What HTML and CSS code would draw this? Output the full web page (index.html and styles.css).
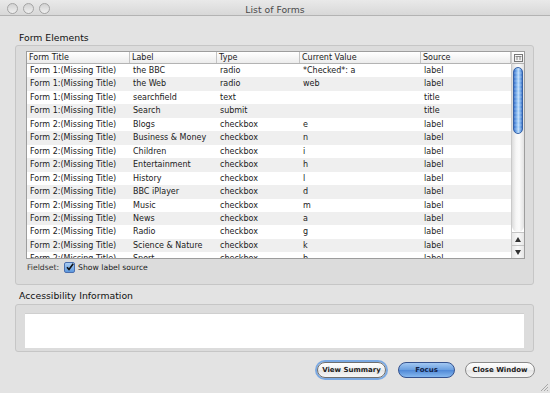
FILE: index.html
```html
<!DOCTYPE html>
<html lang="en">
<head>
    <meta charset="UTF-8">
    <title>List of Forms</title>
    <link rel="stylesheet" href="styles.css">
</head>
<body>
<div class="window">
    <div class="titlebar">
        <div class="lights"><span></span><span></span><span></span></div>
        <div class="title">List of Forms</div>
        <div></div>
    </div>

    <div class="content">
        <h2 class="group-title">Form Elements</h2>
        <div class="group elements">
            <div class="frame">
                <div class="list">
                    <div class="row head">
                        <div>Form Title</div><div>Label</div><div>Type</div><div>Current Value</div><div>Source</div>
                    </div>
                    <div class="rows" id="rows"></div>
                </div>
                <div class="vscroll">
                    <div class="corner">
                        <svg width="9" height="8" viewBox="0 0 9 8"><rect x="0.5" y="0.5" width="8" height="7" fill="none" stroke="#777"/><path d="M3 2v4M6 2v4M1.5 2.5h6" stroke="#888" fill="none"/></svg>
                    </div>
                    <div class="track"><div class="thumb"></div></div>
                    <div class="arrow up"></div>
                    <div class="arrow down"></div>
                </div>
            </div>
            <div class="fieldset-line">
                <span class="fs-label">Fieldset:</span>
                <span class="check">
                    <svg width="8" height="8" viewBox="0 0 8 8"><path d="M1 4.2l2 2.3L7.2 0.8" fill="none" stroke="#111" stroke-width="1.6"/></svg>
                </span>
                <span>Show label source</span>
            </div>
        </div>

        <h2 class="group-title second">Accessibility Information</h2>
        <div class="group info">
            <div class="info-text"></div>
        </div>

        <div class="buttons">
            <button class="btn focused">View Summary</button>
            <button class="btn default">Focus</button>
            <button class="btn">Close Window</button>
        </div>
    </div>

    <svg class="grip" width="10" height="10" viewBox="0 0 10 10"><path d="M9 2L2 9M9 5L5 9M9 8L8 9" stroke="#999" stroke-width="0.8"/></svg>
</div>

<script>
    // filas de la tabla: titulo, etiqueta, tipo, valor, fuente
    const filas = [
        ['Form 1:(Missing Title)', 'the BBC', 'radio', '*Checked*: a', 'label'],
        ['Form 1:(Missing Title)', 'the Web', 'radio', 'web', 'label'],
        ['Form 1:(Missing Title)', 'searchfield', 'text', '', 'title'],
        ['Form 1:(Missing Title)', 'Search', 'submit', '', 'title'],
        ['Form 2:(Missing Title)', 'Blogs', 'checkbox', 'e', 'label'],
        ['Form 2:(Missing Title)', 'Business & Money', 'checkbox', 'n', 'label'],
        ['Form 2:(Missing Title)', 'Children', 'checkbox', 'i', 'label'],
        ['Form 2:(Missing Title)', 'Entertainment', 'checkbox', 'h', 'label'],
        ['Form 2:(Missing Title)', 'History', 'checkbox', 'l', 'label'],
        ['Form 2:(Missing Title)', 'BBC iPlayer', 'checkbox', 'd', 'label'],
        ['Form 2:(Missing Title)', 'Music', 'checkbox', 'm', 'label'],
        ['Form 2:(Missing Title)', 'News', 'checkbox', 'a', 'label'],
        ['Form 2:(Missing Title)', 'Radio', 'checkbox', 'g', 'label'],
        ['Form 2:(Missing Title)', 'Science & Nature', 'checkbox', 'k', 'label'],
        ['Form 2:(Missing Title)', 'Sport', 'checkbox', 'b', 'label']
    ];

    const contenedor = document.getElementById('rows');
    filas.forEach(fila => {
        const row = document.createElement('div');
        row.className = 'row';
        fila.forEach(valor => {
            const cell = document.createElement('div');
            cell.textContent = valor;
            row.appendChild(cell);
        });
        contenedor.appendChild(row);
    });
</script>
</body>
</html>
```

FILE: styles.css
```css
body {
    margin: 0;
    background: #e3e3e3;
    font-family: "DejaVu Sans", Verdana, sans-serif;
    color: #1a1a1a;
}
.window {
    position: relative;
    width: 550px;
    height: 393px;
    overflow: hidden;
}

/* barra de titulo */
.titlebar {
    display: grid;
    grid-template-columns: 1fr auto 1fr;
    align-items: center;
    height: 15px;
    border-bottom: 1px solid #b3b3b3;
    background: linear-gradient(#e9e9e9, #d8d8d8);
}
.lights {
    display: flex;
    gap: 5px;
    padding-left: 7px;
}
.lights span {
    width: 9px;
    height: 9px;
    border-radius: 50%;
    border: 1px solid #a4a4a4;
    background: linear-gradient(#d2d2d2, #efefef);
    margin-top: 1px;
}
.title {
    font-size: 9.3px;
    color: #4a4a4a;
    padding-top: 3px;
}

.content {
    padding: 0 16px 0 15px;
}
.group-title {
    margin: 16px 0 1px 4px;
    font-size: 9.3px;
    line-height: 12px;
    font-weight: normal;
    color: #111;
}
.group-title.second {
    margin-top: 5px;
    margin-bottom: 2px;
}
.group {
    background: #dcdcdc;
    border: 1px solid #c6c6c6;
    border-radius: 3px;
}
.elements {
    padding: 5px 8px 10px 10px;
}

/* tabla */
.frame {
    display: flex;
    height: 206px;
    border: 1px solid #9d9d9d;
    background: #fff;
}
.list {
    flex: 1;
    overflow: hidden;
}
.row {
    display: grid;
    grid-template-columns: 103px 87px 83px 121px 90px;
    height: 13.46px;
    line-height: 13.46px;
    font-size: 8px;
    white-space: nowrap;
}
.row div {
    padding-left: 3px;
    overflow: hidden;
}
.rows .row:nth-child(even) {
    background: #efefef;
}
.row.head {
    height: 11px;
    line-height: 11px;
    border-bottom: 1px solid #b3b3b3;
    background: linear-gradient(#ffffff, #ececec);
}
.row.head div {
    border-right: 1px solid #c4c4c4;
    padding-left: 2px;
}

/* barra de desplazamiento */
.vscroll {
    width: 12px;
    border-left: 1px solid #c9c9c9;
    display: flex;
    flex-direction: column;
}
.corner {
    height: 11px;
    border-bottom: 1px solid #b3b3b3;
    background: linear-gradient(#ffffff, #ececec);
    display: flex;
    align-items: center;
    justify-content: center;
}
.track {
    flex: 1;
    padding: 3px 1px;
    background: linear-gradient(to right, #dcdcdc, #f6f6f6 35%, #fbfbfb 60%, #e2e2e2);
    border-radius: 0 0 6px 6px;
}
.thumb {
    height: 67px;
    border-radius: 5px;
    border: 1px solid #3562a8;
    box-sizing: border-box;
    background:
        repeating-linear-gradient(rgba(255,255,255,0.12) 0 2px, transparent 2px 4px),
        linear-gradient(to right, #3a70c8, #79aeec 30%, #bcdcfb 55%, #7db2ee 78%, #4276c8);
}
.arrow {
    height: 12px;
    border-top: 1px solid #c4c4c4;
    background: linear-gradient(to right, #e6e6e6, #fafafa 50%, #e6e6e6);
    display: flex;
    align-items: center;
    justify-content: center;
}
.arrow::after {
    content: "";
    border-left: 3px solid transparent;
    border-right: 3px solid transparent;
}
.arrow.up::after {
    border-bottom: 5px solid #333;
}
.arrow.down::after {
    border-top: 5px solid #333;
}

.fieldset-line {
    display: flex;
    align-items: center;
    height: 14px;
    margin-top: 1px;
    padding-left: 1px;
    font-size: 7.7px;
}
.fs-label {
    color: #333;
    margin-right: 5px;
}
.check {
    width: 9px;
    height: 9px;
    border: 1px solid #4b6fae;
    border-radius: 2px;
    background: linear-gradient(#a9cdf3, #5d98de);
    display: flex;
    align-items: center;
    justify-content: center;
    margin-right: 3px;
}

.info {
    padding: 8px 9px 3px 9px;
}
.info-text {
    height: 34px;
    background: #fff;
    border-top: 1px solid #cfcfcf;
}

/* botones */
.buttons {
    display: flex;
    justify-content: flex-end;
    gap: 10px;
    margin-top: 10px;
    margin-right: -1px;
}
.btn {
    height: 16px;
    padding: 0;
    border: 1px solid #8a8a8a;
    border-radius: 8px;
    background: linear-gradient(#ffffff, #f0f0f0 50%, #e4e4e4 51%, #f6f6f6);
    font-family: "DejaVu Sans", Verdana, sans-serif;
    font-size: 7px;
    font-weight: bold;
    color: #1c1c1c;
    width: 70px;
}
.btn.focused {
    width: 69px;
    margin-right: 2px;
    border-color: #6f6f6f;
    box-shadow: 0 0 0 2px #7ba9e2;
}
.btn.default {
    width: 57px;
    border-color: #35528e;
    background: linear-gradient(#a3c8f2, #6a9fe0 50%, #4f88d6 51%, #86b8ef);
    color: #14244a;
}

.grip {
    position: absolute;
    right: 1px;
    bottom: 1px;
}
```
